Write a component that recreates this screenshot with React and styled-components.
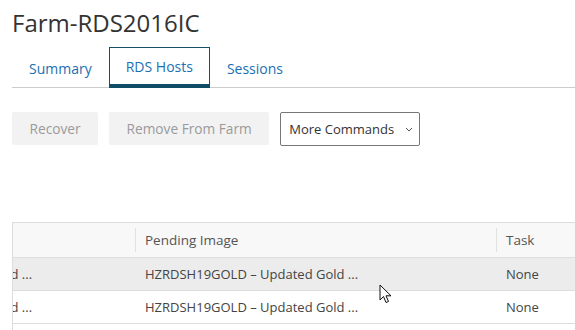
import styled, { createGlobalStyle } from 'styled-components';

const GlobalStyle = createGlobalStyle`
  html, body {
    margin: 0;
    padding: 0;
    background: #fff;
    overflow: hidden;
  }
  body {
    font-family: "Open Sans", "Noto Sans", sans-serif;
    color: #333;
  }
`;

const rows = [
  { base: 'HZRDSH19GOLD – Updated Gold ...', pending: 'HZRDSH19GOLD – Updated Gold ...', task: 'None', hover: true },
  { base: 'HZRDSH19GOLD – Updated Gold ...', pending: 'HZRDSH19GOLD – Updated Gold ...', task: 'None' },
];

export default function App() {
  return (
    <>
      <GlobalStyle />
      <Page>
        <Title>Farm-RDS2016IC</Title>
        <Tabs>
          <Tab>Summary</Tab>
          <Tab $active>RDS Hosts</Tab>
          <Tab>Sessions</Tab>
        </Tabs>
        <Toolbar>
          <Button disabled>Recover</Button>
          <Button disabled>Remove From Farm</Button>
          <Dropdown>
            More Commands
            <Chevron viewBox="0 0 8 5">
              <path d="M1 1 L4 4 L7 1" fill="none" stroke="#555" strokeWidth="1" />
            </Chevron>
          </Dropdown>
        </Toolbar>
        <TableFrame>
          <Grid>
            <HeadCell />
            <HeadCell $sep>Pending Image</HeadCell>
            <HeadCell $sep>Task</HeadCell>
            {rows.map((r, i) => (
              <Row key={i} $hover={r.hover}>
                <Cell>{r.base}</Cell>
                <Cell>{r.pending}</Cell>
                <Cell>{r.task}</Cell>
              </Row>
            ))}
          </Grid>
          <Cursor viewBox="0 0 13 20">
            <path
              d="M1 1 L1 16 L4.5 12.5 L7 18.5 L9.5 17.5 L7 11.8 L12 11.8 Z"
              fill="#fff"
              stroke="#111"
              strokeWidth="1"
              strokeLinejoin="round"
            />
          </Cursor>
        </TableFrame>
      </Page>
    </>
  );
}

const Page = styled.div`
  padding: 8px 0 0 12px;
`;

const Title = styled.h1`
  margin: 0;
  font-size: 24px;
  font-weight: 400;
  line-height: 30px;
  color: #333;
`;

const Tabs = styled.div`
  display: flex;
  margin-top: 9px;
  border-bottom: 1px solid #ccc;
  height: 40px;
`;

const Tab = styled.div`
  box-sizing: border-box;
  height: 41px;
  padding: 0 16px;
  display: flex;
  align-items: center;
  font-size: 14px;
  color: #1b6fb3;
  border: 1px solid ${(p) => (p.$active ? '#164f66' : 'transparent')};
  border-bottom: ${(p) => (p.$active ? '4px solid #0f4c66' : 'none')};
`;

const Toolbar = styled.div`
  display: flex;
  gap: 11px;
  margin-top: 24px;
`;

const Button = styled.button`
  height: 33px;
  padding: 0 17.5px;
  border: none;
  border-radius: 2px;
  background: #f2f2f2;
  color: #9a9a9a;
  font-family: inherit;
  font-size: 13.7px;
`;

const Dropdown = styled.div`
  box-sizing: border-box;
  height: 34px;
  display: flex;
  align-items: center;
  gap: 11px;
  padding: 0 6px 0 8px;
  border: 1px solid #777;
  border-radius: 2px;
  font-size: 13px;
  color: #333;
`;

const Chevron = styled.svg`
  width: 8px;
  height: 5px;
`;

const TableFrame = styled.div`
  position: relative;
  margin-top: 76px;
  border-top: 1px solid #ddd;
  border-left: 1px solid #ddd;
  overflow: hidden;
  height: 120px;
`;

const Grid = styled.div`
  display: grid;
  grid-template-columns: 326px 361px 200px;
  margin-left: -204px;
`;

const HeadCell = styled.div`
  position: relative;
  height: 34px;
  display: flex;
  align-items: center;
  padding-left: 10px;
  background: #f8f8f8;
  border-bottom: 1px solid #ddd;
  font-size: 13.5px;
  color: #555;

  &::before {
    content: '';
    display: ${(p) => (p.$sep ? 'block' : 'none')};
    position: absolute;
    left: 0;
    top: 5px;
    bottom: 5px;
    border-left: 1px solid #e2e2e2;
  }
`;

const Row = styled.div`
  display: contents;

  & > div {
    background: ${(p) => (p.$hover ? '#ececec' : '#fff')};
  }
`;

const Cell = styled.div`
  height: 32px;
  display: flex;
  align-items: center;
  padding-left: 10px;
  border-bottom: 1px solid #ddd;
  font-size: 13px;
  color: #444;
  white-space: nowrap;
  overflow: hidden;
`;

const Cursor = styled.svg`
  position: absolute;
  left: 366px;
  top: 61px;
  width: 13px;
  height: 20px;
`;
